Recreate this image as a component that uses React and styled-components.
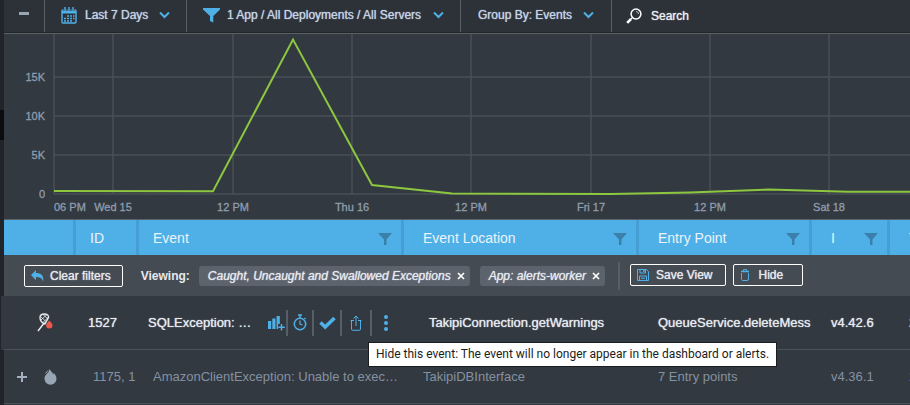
import React from "react";
import styled, { createGlobalStyle, css } from "styled-components";

const GlobalStyle = createGlobalStyle`
  * {
    box-sizing: border-box;
  }
  body {
    margin: 0;
    background-color: #323940;
    font-family: "Liberation Sans", Arial, sans-serif;
  }
  button,
  input,
  select {
    font: inherit;
    color: inherit;
    background: none;
    border: 0;
    border-radius: 0;
    padding: 0;
    margin: 0;
    text-shadow: inherit;
  }
`;

const blue = "#4fb0e8";

const Page = styled.div`
  display: flex;
  min-height: 100vh;
  overflow: hidden;
`;

const Rail = styled.aside`
  flex: 0 0 4px;
  background-color: #21252b;
  padding-top: 110px;

  > div {
    height: 30px;
    background-color: #0b0c0d;
  }
`;

const Main = styled.main`
  flex: 1;
  min-width: 0;
`;

const Toolbar = styled.header`
  display: flex;
  height: 34px;
  background-color: #2c3238;
  border-bottom: 1px solid #596066;
  box-shadow: inset 0 -1px #22262a;
  font-size: 12px;
  color: #c5d3e6;
  text-shadow: 0 0 1px currentColor;
`;

const ToolItem = styled.label`
  display: flex;
  align-items: center;
  gap: ${(props) => props.$gap || 8}px;
  padding: 0 ${(props) => props.$pad || 16}px 2px;
  border-right: 1px solid #596066;
  margin-bottom: 1px;

  > select {
    appearance: none;
    outline: none;
  }
  > select + svg {
    margin-left: 2px;
  }
`;

const Collapse = styled.button`
  width: 41px;
  margin-bottom: 1px;
  border-right: 1px solid #596066;
  display: flex;
  justify-content: center;
  padding-top: 12px;

  &::before {
    content: "";
    width: 10px;
    height: 3px;
    background-color: #98a5b5;
  }
`;

const Search = styled.label`
  flex: 1;
  display: flex;
  align-items: center;
  gap: 9px;
  padding: 0 14px 2px;
  color: #eceff3;

  > input {
    flex: 1;
    min-width: 0;
    outline: none;
  }
  > input::placeholder {
    color: inherit;
    opacity: 1;
  }
`;

const ChartPanel = styled.section`
  border-bottom: 1px solid #596066;
  background-color: #323940;

  > svg {
    display: block;
    width: 100%;
    height: auto;
  }
  text {
    font-size: 11px;
    fill: #909dae;
    stroke: #909dae;
    stroke-width: 0.3;
  }
`;

// the last column runs past the right edge of the window
const Table = styled.table`
  width: calc(100% + 60px);
  table-layout: fixed;
  border-collapse: separate;
  border-spacing: 0;
`;

const HeadCell = styled.th`
  height: 35px;
  padding: 0 9px 0 ${(props) => props.$left || 14}px;
  background-color: ${blue};
  border-right: 3px solid #469fd4;
  color: #eaf3fa;
  font-size: 14px;
  font-weight: normal;
  text-align: left;

  > div {
    display: flex;
    align-items: center;
    justify-content: space-between;
  }
  button {
    display: flex;
    padding-top: 3px;
  }
`;

const FilterCell = styled.td`
  padding: 0;
  background-color: #454b53;
`;

const FilterBar = styled.div`
  display: flex;
  align-items: center;
  height: 41px;
  padding-left: 20px;
  font-size: 12px;
  color: #e6eaf0;
  text-shadow: 0 0 1px currentColor;
`;

const OutlineButton = styled.button`
  display: flex;
  align-items: center;
  gap: ${(props) => props.$gap || 7}px;
  height: 22px;
  padding: 0 ${(props) => props.$right || 12}px 0 6px;
  border: 1px solid #fff;
  border-radius: 2px;
`;

const Viewing = styled.strong`
  margin: 0 9px 0 18px;
  text-shadow: none;
`;

const Chip = styled.span`
  display: flex;
  align-items: center;
  gap: 6px;
  height: 20px;
  padding: 0 5px 0 9px;
  margin-right: 10px;
  border-radius: 3px;
  background-color: #5c636d;
  font-style: italic;

  > button {
    display: flex;
  }
`;

const Divider = styled.span`
  width: 2px;
  height: ${(props) => props.$height || 26}px;
  margin-left: ${(props) => props.$left || 0}px;
  background-color: #555e69;
`;

const SavedActions = styled.div`
  display: flex;
  align-items: center;
  gap: 7px;
  margin-left: 10px;
  padding-bottom: 2px;
`;

const Row = styled.tr`
  color: #8591a1;
  font-size: 13px;

  ${(props) =>
    props.$active &&
    css`
      color: #e6eaf0;
      text-shadow: 0 0 1px currentColor;

      > td:first-child {
        box-shadow: -3px 0 #323940;
      }
    `}
`;

const Cell = styled.td`
  height: 54px;
  padding: 0 ${(props) => props.$right || 0}px 0
    ${(props) => props.$left || 19}px;
  background-color: #323940;
  border-bottom: 1px solid #4a5159;
  white-space: nowrap;
  overflow: ${(props) => (props.$open ? "visible" : "hidden")};
`;

const IconCell = styled.div`
  display: flex;
  align-items: center;
  gap: ${(props) => props.$gap || 0}px;

  > button {
    display: flex;
  }
`;

const Ellipsis = styled.div`
  flex: 1;
  overflow: hidden;
  text-overflow: ellipsis;
  margin-right: ${(props) => props.$right || 0}px;
`;

const EventLine = styled.div`
  display: flex;
  align-items: center;
`;

const Actions = styled.div`
  display: flex;
  align-items: center;
  margin-left: 12px;
`;

const Action = styled.button`
  position: relative;
  display: flex;
  justify-content: center;
  width: ${(props) => props.$width || 26}px;
`;

const Tooltip = styled.span`
  position: absolute;
  z-index: 2;
  top: 27px;
  left: -4px;
  height: 25px;
  padding: 0 7px;
  border: 1px solid #1b1d20;
  background-color: #fff;
  color: #1c1c1c;
  font-family: Roboto, "Noto Sans", sans-serif;
  font-size: 12px;
  line-height: 23px;
  text-shadow: none;
`;

const Chevron = () => (
  <svg width="11" height="8" viewBox="0 0 11 8" fill="none">
    <path d="M1 1.5 5.5 6 10 1.5" stroke={blue} strokeWidth="2" />
  </svg>
);

const Calendar = () => (
  <svg width="16" height="17" viewBox="0 0 16 17" fill="none">
    <rect x="1" y="3" width="14" height="13" rx="1" stroke={blue} strokeWidth="1.400" />
    <path d="M1 5h14" stroke={blue} strokeWidth="3" />
    <path d="M4 0v4M8 0v4M12 0v4" stroke="#2c3238" strokeWidth="3" />
    <path d="M4 0v4M8 0v4M12 0v4" stroke={blue} strokeWidth="1.4" />
    <path
      d="M6 9h2M9 9h2M12 9h1.500M3 11.500h2M6 11.500h2M9 11.500h2M12 11.500h1.500M3 14h2M6 14h2M9 14h2"
      stroke={blue}
      strokeWidth="1.7"
    />
  </svg>
);

const Funnel = () => (
  <svg width="17" height="17" viewBox="0 0 17 17">
    <path d="M0 1h17v1.500L10.300 9v6.500L7 14V9L0 2.500z" fill={blue} />
  </svg>
);

const HeadFunnel = () => (
  <svg width="14" height="13" viewBox="0 0 14 13">
    <path d="M0 0h14L8.500 6.500V12H6V6.500z" fill="#3a80ab" />
  </svg>
);

const Magnifier = () => (
  <svg width="16" height="16" viewBox="0 0 16 16" fill="none">
    <circle cx="10" cy="6" r="4.900" stroke="#fff" strokeWidth="1.500" />
    <path d="M10 3.500a2.500 2.500 0 0 1 2.500 2.500" stroke="#b9c0c7" />
    <path d="M6.500 9.500 4.800 11.200" stroke="#fff" strokeWidth="1.200" />
    <path d="M5 11 1.200 14.800" stroke="#fff" strokeWidth="2.600" />
  </svg>
);

const Undo = () => (
  <svg width="13" height="12" viewBox="0 0 13 12">
    <path
      d="M5 0v3c5 0 8 2.500 7.300 8.500C11.200 8.300 9 7 5 7v3.200L0 5z"
      fill={blue}
    />
  </svg>
);

const Cross = () => (
  <svg width="8" height="8" viewBox="0 0 8 8">
    <path d="M1 1l6 6M7 1 1 7" stroke="#fff" strokeWidth="1.700" />
  </svg>
);

const Floppy = () => (
  <svg width="12" height="12" viewBox="0 0 12 12" fill="none" stroke={blue}>
    <path d="M.5.5h9l2 2v9H.5z" />
    <path d="M3 .5v3.500h5.500V.5M2.500 11.500V7h7v4.500M4 9.200h4" />
    <path d="M6.800 1v2" strokeWidth="1.500" />
  </svg>
);

const Bin = () => (
  <svg width="10" height="12" viewBox="0 0 10 12" fill="none" stroke={blue}>
    <path d="M3.500 2V.6h3V2" />
    <path d="M1 2.500h8" strokeWidth="1.500" />
    <path d="M1.500 4v6c0 1 .5 1.500 1.500 1.500h4c1 0 1.500-.5 1.500-1.500V4" />
  </svg>
);

const Net = () => (
  <svg width="17" height="19" viewBox="0 0 17 19" fill="none">
    <path
      d="M1 18 7.500 9.500M3 4.500C3 2 5 1 7.500 1S12 2.500 11.500 4.500L8 11C5 10 3 7.500 3 4.500z"
      stroke="#e8ecf0"
      strokeWidth="1.400"
    />
    <path
      d="M3.500 3.500 9.500 9M6 1.500l5 4.500M10 1.500 4 7M11.500 4 6 9.500"
      stroke="#e8ecf0"
      strokeWidth=".8"
    />
    <path
      d="M12 7.500c1.500 1.500 3.500 2.800 3.500 4.800a3.200 3.200 0 0 1-6.400 0c0-2 2.400-2.800 2.900-4.800z"
      fill="#f0574b"
    />
  </svg>
);

const Drop = () => (
  <svg width="13" height="16" viewBox="0 0 13 16">
    <path
      d="M5.500 0C7 3 9 3 9 5.500l1-1.500c1 1.500 2.500 3.200 2.500 5.800a6 6 0 0 1-12 0C.5 6.500 3.200 4.500 4.500 3z"
      fill="#98a5b5"
    />
    <path d="M1.500 4.500 4 1.500" stroke="#98a5b5" />
  </svg>
);

const Plus = () => (
  <svg width="10" height="10" viewBox="0 0 10 10">
    <path d="M5 0v10M0 5h10" stroke="#a5b0be" strokeWidth="2" />
  </svg>
);

const BarsPlus = () => (
  <svg width="17" height="16" viewBox="0 0 17 16" fill={blue}>
    <path d="M0 6h3.200v8H0zM4.300 3.500h3.200V14H4.300zM8.600 1h3.200v8H8.600zM8.600 9H10v5H8.600z" />
    <path d="M13.500 9v6.500M10.300 12.300h6.500" stroke={blue} strokeWidth="1.500" />
  </svg>
);

const Stopwatch = () => (
  <svg width="14" height="17" viewBox="0 0 14 17" fill="none" stroke={blue}>
    <circle cx="7" cy="10" r="5.700" strokeWidth="1.500" />
    <path d="M5 1h4M7 1v3M11.500 4l1 1" strokeWidth="1.500" />
    <path d="M7 6.500V10l2.500 1" strokeWidth="1.200" />
  </svg>
);

const Check = () => (
  <svg width="17" height="14" viewBox="0 0 17 14" fill="none">
    <path d="M1.500 6.500 6.200 11 15.500 2" stroke={blue} strokeWidth="3.600" />
  </svg>
);

const HideIcon = () => (
  <svg width="12" height="16" viewBox="0 0 12 16" fill="none" stroke={blue}>
    <path d="M4 5.500H.5M8 5.500h3.500M1.500 6v8c0 .8.500 1.300 1.300 1.300h6.400c.8 0 1.300-.5 1.300-1.300V6" />
    <path d="M6 11V1.500M3.500 3.500 6 1l2.500 2.500" />
  </svg>
);

const Dots = () => (
  <svg width="4" height="16" viewBox="0 0 4 16" fill={blue}>
    <circle cx="2" cy="2" r="2" />
    <circle cx="2" cy="8" r="2" />
    <circle cx="2" cy="14" r="2" />
  </svg>
);

const xTicks = [
  { x: 50, label: "06 PM", anchor: "start" },
  { x: 109, label: "Wed 15" },
  { x: 229, label: "12 PM" },
  { x: 348, label: "Thu 16" },
  { x: 467, label: "12 PM" },
  { x: 587, label: "Fri 17" },
  { x: 706, label: "12 PM" },
  { x: 825, label: "Sat 18" },
];

const yTicks = [
  { y: 43, label: "15K" },
  { y: 82, label: "10K" },
  { y: 121, label: "5K" },
  { y: 160, label: "0" },
];

const Chart = () => (
  <svg viewBox="0 0 906 185" role="img" aria-label="Events over time">
    <g stroke="#484f57" strokeWidth="1.5">
      {xTicks.map((t) => (
        <line key={t.x} x1={t.x} x2={t.x} y1="0" y2="160" />
      ))}
      {yTicks.map((t) => (
        <line key={t.y} x1="50" x2="906" y1={t.y} y2={t.y} />
      ))}
    </g>
    {yTicks.map((t) => (
      <text key={t.y} x="41" y={t.y + 4} textAnchor="end">
        {t.label}
      </text>
    ))}
    {xTicks.map((t) => (
      <text key={t.x} x={t.x} y="177" textAnchor={t.anchor || "middle"}>
        {t.label}
      </text>
    ))}
    <polyline
      points="50,157 209,157.300 289,5.500 368,151 448,159.500 607,160 686,158.500 765,155.500 844,157.700 906,157.700"
      fill="none"
      stroke="#8dc63f"
      strokeWidth="2"
    />
  </svg>
);

const columns = [
  { label: "" },
  { label: "ID" },
  { label: "Event", filter: true },
  { label: "Event Location", left: 19, filter: true },
  { label: "Entry Point", left: 19, filter: true },
  { label: "I", left: 19, filter: true },
  { label: "T", left: 19 },
];

const ToolSelect = ({ label, value, icon, gap, pad }) => (
  <ToolItem $gap={gap} $pad={pad}>
    {icon}
    <select aria-label={label} defaultValue={value}>
      <option>{value}</option>
    </select>
    <Chevron />
  </ToolItem>
);

const FilterChip = ({ children }) => (
  <Chip>
    {children}
    <button aria-label="Remove filter">
      <Cross />
    </button>
  </Chip>
);

const App = () => {
  return (
    <>
      <GlobalStyle />
      <Page>
        <Rail>
          <div />
        </Rail>
        <Main>
          <Toolbar>
            <Collapse aria-label="Collapse" />
            <ToolSelect
              label="Time range"
              value="Last 7 Days"
              icon={<Calendar />}
            />
            <ToolSelect
              label="Scope"
              value="1 App / All Deployments / All Servers"
              icon={<Funnel />}
              gap={7}
            />
            <ToolSelect label="Group by" value="Group By: Events" pad={17} />
            <Search>
              <Magnifier />
              <input type="text" placeholder="Search" aria-label="Search" />
            </Search>
          </Toolbar>
          <ChartPanel>
            <Chart />
          </ChartPanel>
          <Table>
            <colgroup>
              <col style={{ width: 72 }} />
              <col style={{ width: 63 }} />
              <col />
              <col style={{ width: 235 }} />
              <col style={{ width: 173 }} />
              <col style={{ width: 78 }} />
              <col style={{ width: 80 }} />
            </colgroup>
            <thead>
              <tr>
                {columns.map((c, i) => (
                  <HeadCell key={i} $left={c.left}>
                    <div>
                      {c.label}
                      {c.filter && (
                        <button aria-label={`Filter ${c.label}`}>
                          <HeadFunnel />
                        </button>
                      )}
                    </div>
                  </HeadCell>
                ))}
              </tr>
            </thead>
            <tbody>
              <tr>
                <FilterCell colSpan={7}>
                  <FilterBar>
                    <OutlineButton $gap={6} $right={11}>
                      <Undo />
                      Clear filters
                    </OutlineButton>
                    <Viewing>Viewing:</Viewing>
                    <FilterChip>
                      Caught, Uncaught and Swallowed Exceptions
                    </FilterChip>
                    <FilterChip>App: alerts-worker</FilterChip>
                    <Divider $height={28} $left={3} />
                    <SavedActions>
                      <OutlineButton>
                        <Floppy />
                        Save View
                      </OutlineButton>
                      <OutlineButton $right={19} $gap={9}>
                        <Bin />
                        Hide
                      </OutlineButton>
                    </SavedActions>
                  </FilterBar>
                </FilterCell>
              </tr>
              <Row $active>
                <Cell $left={33}>
                  <IconCell>
                    <Net />
                  </IconCell>
                </Cell>
                <Cell $left={12}>1527</Cell>
                <Cell $left={9} $right={4} $open>
                  <EventLine>
                    <Ellipsis>SQLException: Connection is closed</Ellipsis>
                    <Actions>
                      <Action $width={20} aria-label="Add to chart">
                        <BarsPlus />
                      </Action>
                      <Divider />
                      <Action $width={24} aria-label="Snooze">
                        <Stopwatch />
                      </Action>
                      <Divider />
                      <Action aria-label="Resolve">
                        <Check />
                      </Action>
                      <Divider />
                      <Action $width={28} aria-label="Hide">
                        <HideIcon />
                      </Action>
                      <Divider />
                      <Action $width={28} aria-label="More">
                        <Dots />
                        <Tooltip role="tooltip">
                          Hide this event: The event will no longer appear in
                          the dashboard or alerts.
                        </Tooltip>
                      </Action>
                    </Actions>
                  </EventLine>
                </Cell>
                <Cell $left={25}>TakipiConnection.getWarnings</Cell>
                <Cell>QueueService.deleteMess</Cell>
                <Cell>v4.42.6</Cell>
                <Cell>2</Cell>
              </Row>
              <Row>
                <Cell $left={13}>
                  <IconCell $gap={17}>
                    <button aria-label="Expand">
                      <Plus />
                    </button>
                    <Drop />
                  </IconCell>
                </Cell>
                <Cell $left={17}>1175, 1</Cell>
                <Cell $left={14}>
                  <Ellipsis $right={5}>
                    AmazonClientException: Unable to execute HTTP request
                  </Ellipsis>
                </Cell>
                <Cell>TakipiDBInterface</Cell>
                <Cell>7 Entry points</Cell>
                <Cell>v4.36.1</Cell>
                <Cell>2</Cell>
              </Row>
            </tbody>
          </Table>
        </Main>
      </Page>
    </>
  );
};

export default App;
